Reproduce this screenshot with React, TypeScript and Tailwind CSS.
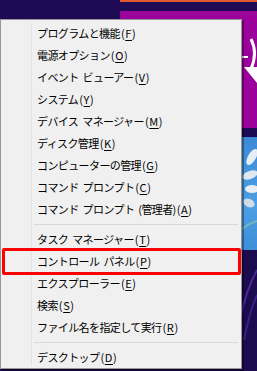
import React from "react";

type Item = { pre: string; key: string };

const group1: Item[] = [
  { pre: "プログラムと機能", key: "F" },
  { pre: "電源オプション", key: "O" },
  { pre: "イベント ビューアー", key: "V" },
  { pre: "システム", key: "Y" },
  { pre: "デバイス マネージャー", key: "M" },
  { pre: "ディスク管理", key: "K" },
  { pre: "コンピューターの管理", key: "G" },
  { pre: "コマンド プロンプト", key: "C" },
  { pre: "コマンド プロンプト (管理者)", key: "A" },
];
const group2: Item[] = [
  { pre: "タスク マネージャー", key: "T" },
  { pre: "コントロール パネル", key: "P" },
  { pre: "エクスプローラー", key: "E" },
  { pre: "検索", key: "S" },
  { pre: "ファイル名を指定して実行", key: "R" },
];
const group3: Item[] = [{ pre: "デスクトップ", key: "D" }];

function Row({ item, highlight }: { item: Item; highlight?: boolean }) {
  const parts = item.pre.split(" ");
  return (
    <div className="relative h-[22px] flex items-center pl-[36px] text-[11px] leading-none text-black whitespace-nowrap">
      {parts.map((p, i) => (
        <span key={i} className={i > 0 ? "tracking-[-0.6px] pl-[4px]" : "tracking-[-0.6px]"}>
          {p}
        </span>
      ))}
      <span className="tracking-[0.6px] pl-[1px]">
        (<span className="underline underline-offset-[2px]">{item.key}</span>)
      </span>
      {highlight && (
        <div className="absolute left-[1px] right-0 top-[-2px] bottom-[-3px] border-[3px] border-[#ff0000] rounded-[2px]" />
      )}
    </div>
  );
}

function Sep() {
  return (
    <div className="h-[8px] flex items-center pl-[33px] pr-[3px]">
      <div className="h-px w-full bg-[#d7d7d7]" />
    </div>
  );
}

export default function App() {
  return (
    <div
      className="relative w-[257px] h-[371px] overflow-hidden bg-[#1e0a55]"
      style={{ fontFamily: '"Noto Sans CJK JP", "Noto Sans", sans-serif' }}
    >
      {/* wallpaper */}
      <div className="absolute inset-0 flex flex-col">
        <div className="h-[2px] ml-[120px] bg-[#e05a30]" />
        <div className="h-[9px]" />
        <div className="h-[117px] ml-[120px] bg-[#9a029b]">
          <svg width="137" height="117" viewBox="0 0 137 117">
            <rect x="120" y="45" width="8" height="2" fill="#ffffff" />
            <path d="M131 28 Q138 42 131 58" stroke="#ffffff" strokeWidth="3" fill="none" />
            <path d="M124 56 L137 56 L137 72 Z" fill="#ffffff" />
          </svg>
        </div>
        <div className="h-[9px]" />
        <div className="h-[113px] bg-[linear-gradient(180deg,#3b8ad6,#4d9ee3_60%,#3f8fd9)]">
          <svg width="257" height="113" viewBox="0 0 257 113">
            <ellipse cx="252" cy="20" rx="4" ry="9" fill="#e6eef5" transform="rotate(30 252 20)" />
            <ellipse cx="250" cy="38" rx="8" ry="4" fill="#dfe8f0" transform="rotate(-20 250 38)" />
            <ellipse cx="252" cy="52" rx="7" ry="4" fill="#e8eef4" />
            <ellipse cx="249" cy="66" rx="6" ry="4" fill="#d0dce8" transform="rotate(25 249 66)" />
            <path d="M242 92 Q250 86 257 84" stroke="#8fd0a0" strokeWidth="2" fill="none" opacity="0.6" />
          </svg>
        </div>
        <div className="flex-1 bg-[#1d0b50]">
          <svg width="257" height="121" viewBox="0 0 257 121">
            <path d="M257 20 Q246 40 240 70" stroke="#4a2a95" strokeWidth="2" fill="none" />
            <path d="M257 45 Q250 60 244 90" stroke="#3a2080" strokeWidth="2" fill="none" />
          </svg>
        </div>
      </div>

      {/* context menu */}
      <div className="absolute left-0 top-[19px] w-[242px] bg-[#f0f0f0] border border-[#979797] pt-[2px] shadow-[2px_2px_0_0_rgba(0,0,0,0.35)]">
        <div className="absolute left-[30px] top-[3px] bottom-[2px] w-px bg-[#e2e2e2]" />
        <div className="relative flex flex-col">
          {group1.map((it) => (
            <Row key={it.key} item={it} />
          ))}
          <Sep />
          {group2.map((it) => (
            <Row key={it.key} item={it} highlight={it.key === "P"} />
          ))}
          <Sep />
          {group3.map((it) => (
            <Row key={it.key} item={it} />
          ))}
        </div>
      </div>
    </div>
  );
}
